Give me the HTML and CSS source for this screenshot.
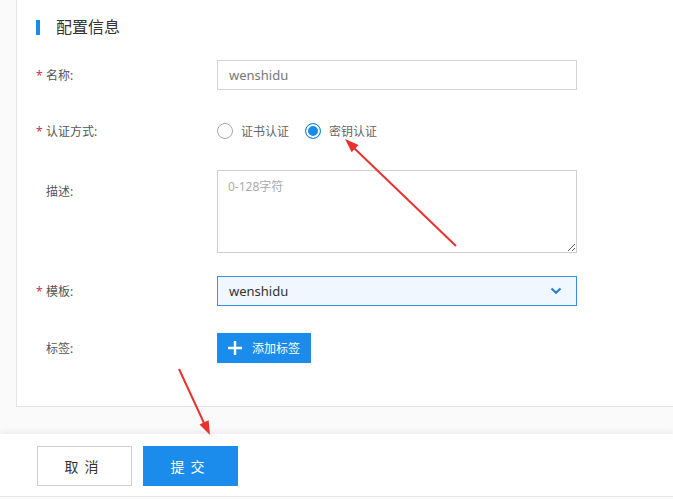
FILE: index.html
```html
<!DOCTYPE html>
<html lang="zh-CN">
<head>
<meta charset="utf-8">
<title>配置信息</title>
<link rel="stylesheet" href="styles.css">
</head>
<body>
<div class="page">
  <section class="card">
    <div class="head">
      <span class="bar"></span>
      <h2 class="title">配置信息</h2>
    </div>
    <div class="row row-name">
      <div class="label"><span class="req">*</span>名称:</div>
      <div class="field"><input class="input" type="text" value="wenshidu"></div>
    </div>
    <div class="row row-auth">
      <div class="label"><span class="req">*</span>认证方式:</div>
      <div class="field radios">
        <label class="radio"><span class="dot"></span>证书认证</label>
        <label class="radio on"><span class="dot"></span>密钥认证</label>
      </div>
    </div>
    <div class="row row-desc">
      <div class="label"><span class="req blank"></span>描述:</div>
      <div class="field"><textarea class="textarea" placeholder="0-128字符"></textarea></div>
    </div>
    <div class="row row-tpl">
      <div class="label"><span class="req">*</span>模板:</div>
      <div class="field">
        <div class="select">
          <span>wenshidu</span>
          <svg class="chev" width="12" height="8" viewBox="0 0 12 8"><path d="M1.5 1.5 L6 5.8 L10.5 1.5" fill="none" stroke="#2b7fcf" stroke-width="2.2"/></svg>
        </div>
      </div>
    </div>
    <div class="row row-tag">
      <div class="label"><span class="req blank"></span>标签:</div>
      <div class="field">
        <button class="btn-add"><svg width="14" height="14" viewBox="0 0 14 14"><path d="M7 0 V14 M0 7 H14" stroke="#fff" stroke-width="2.4"/></svg><span>添加标签</span></button>
      </div>
    </div>
  </section>
  <footer class="foot">
    <button class="btn btn-cancel">取消</button>
    <button class="btn btn-ok">提交</button>
  </footer>
  <svg class="marks" width="673" height="499" viewBox="0 0 673 499">
    <line x1="456" y1="246" x2="354" y2="148" stroke="#e8322f" stroke-width="2"/>
    <polygon points="345,139 358.6,145.1 351.6,152.3" fill="#e8322f"/>
    <line x1="179" y1="369" x2="204" y2="423" stroke="#e8322f" stroke-width="2"/>
    <polygon points="210,435 208.6,420.2 199.5,424.4" fill="#e8322f"/>
  </svg>
</div>
</body>
</html>
```

FILE: styles.css
```css
* { box-sizing: border-box; }
html, body { margin: 0; padding: 0; background: #fff; }
body {
  font-family: "Noto Sans", "Noto Sans CJK SC", sans-serif;
  color: #333;
  width: 673px;
  height: 499px;
  overflow: hidden;
}
.page { position: relative; width: 673px; height: 499px; background: #fafafa; overflow: hidden; }
.card {
  margin-left: 16px;
  height: 407px;
  background: #fff;
  border-left: 1px solid #e4e4e4;
  border-bottom: 1px solid #e4e4e4;
  padding-left: 19px;
}
.head { height: 54px; display: flex; align-items: center; }
.bar { width: 4px; height: 15px; background: #1a8be6; margin-right: 16px; }
.title { margin: 0; font-size: 16px; font-weight: normal; color: #333; line-height: 20px; }
.row { display: flex; align-items: center; }
.label { width: 181px; font-size: 12px; color: #555; display: flex; align-items: center; }
.req { width: 10px; color: #d0304a; font-size: 12px; display: inline-block; }
.field { width: 360px; }
.row-name { margin-top: 6px; height: 30px; }
.input {
  width: 360px; height: 30px; border: 1px solid #d4d4d4; padding: 0 11px;
  font: 13px "Noto Sans", "Noto Sans CJK SC", sans-serif; color: #777; outline: none; background: #fff;
}
.row-auth { margin-top: 26px; height: 30px; }
.radios { display: flex; align-items: center; }
.radio { display: flex; align-items: center; font-size: 12px; color: #666; margin-right: 16px; }
.dot {
  width: 16px; height: 16px; border-radius: 50%; border: 1px solid #a8a8a8; margin-right: 8px; background: #fff;
}
.radio.on .dot { border-color: #1a8be6; box-shadow: inset 0 0 0 2px #fff; background: #1a8be6; }
.row-desc { margin-top: 24px; align-items: flex-start; }
.row-desc .label { padding-top: 12px; }
.textarea {
  display: block; width: 360px; height: 83px; border: 1px solid #cfcfcf; padding: 6px 10px;
  font: 12px "Noto Sans", "Noto Sans CJK SC", sans-serif; color: #666; resize: vertical; outline: none;
}
.textarea::placeholder { color: #aaa; }
.row-tpl { margin-top: 23px; height: 30px; }
.select {
  width: 360px; height: 30px; border: 1px solid #3a8ee6; background: #f0f7fe;
  display: flex; align-items: center; justify-content: space-between; padding: 0 14px 0 11px;
  font-size: 13px; color: #333;
}
.chev { display: block; }
.row-tag { margin-top: 27px; height: 30px; }
.btn-add {
  height: 30px; width: 94px; border: 0; background: #1b8ceb; color: #fff; display: flex; align-items: center;
  padding: 0 0 0 11px; font: 12px "Noto Sans", "Noto Sans CJK SC", sans-serif; cursor: pointer;
}
.btn-add svg { margin-right: 10px; }
.foot {
  height: 63px; margin-top: 27px; background: #fff; border-bottom: 1px solid #e6e6e6;
  box-shadow: 0 -3px 5px rgba(0,0,0,0.05);
  display: flex; align-items: center; padding: 2px 0 0 37px; gap: 11px;
}
.btn {
  width: 95px; height: 40px; font: 14px "Noto Sans", "Noto Sans CJK SC", sans-serif; letter-spacing: 6px;
  padding-left: 6px; cursor: pointer;
}
.btn-cancel { background: #fff; border: 1px solid #cfcfcf; color: #333; }
.btn-ok { background: #1b8ceb; border: 1px solid #1b8ceb; color: #fff; }
.marks { position: absolute; left: 0; top: 0; pointer-events: none; }
```
